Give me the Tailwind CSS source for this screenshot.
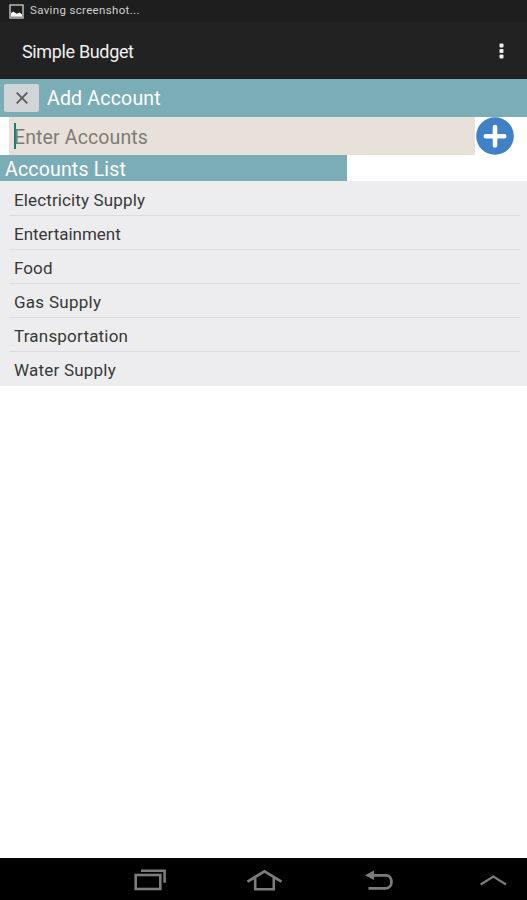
<!DOCTYPE html>
<html lang="en">
<head>
  <meta charset="UTF-8" />
  <meta name="viewport" content="width=device-width, initial-scale=1.0"/>
  <title>Simple Budget</title>
  <script src="https://cdn.jsdelivr.net/npm/@tailwindcss/browser@4"></script>
</head>
<body class="bg-white font-['Roboto',sans-serif]">
<div class="w-[527px] h-[900px] flex flex-col overflow-hidden">

  <!-- Status bar -->
  <div class="h-[22px] shrink-0 bg-[#1e1e1e] flex items-center pl-[9px] text-[#cfcfcf]">
    <svg class="w-[15px] h-[15px] shrink-0" viewBox="0 0 15 15">
      <rect x="1" y="1" width="13" height="13" fill="#1e1e1e" stroke="#c4c4c4" stroke-width="1.4"/>
      <path d="M2 12.700V9L4.500 7.500L7.500 9.800L10.500 8.500L13 10.500V12.700Z" fill="#fff"/>
    </svg>
    <span class="ml-[6px] -mt-px text-[11.5px] leading-none tracking-[0.34px] whitespace-nowrap">Saving screenshot...</span>
  </div>

  <!-- Action bar -->
  <header class="h-[57px] shrink-0 bg-[#222222] border-b border-[#1a2424] flex items-center justify-between pl-[22px] pr-[23px]">
    <h1 class="mt-[3px] text-[18px] leading-none text-[#f0f0f0] tracking-[-0.35px]">Simple Budget</h1>
    <svg class="mt-[2px] w-[5px] h-[16px]" viewBox="0 0 5 16" fill="#f0f0f0">
      <rect x="0.5" y="0.5" width="4" height="4" rx="1"/>
      <rect x="0.5" y="6" width="4" height="4" rx="1"/>
      <rect x="0.5" y="11.5" width="4" height="4" rx="1"/>
    </svg>
  </header>

  <div class="h-[38px] shrink-0 bg-[#7badb7] flex items-center pl-1">
    <button class="w-[35px] h-[28px] rounded-[2px] bg-[#d2d5d6] flex items-center justify-center">
      <svg class="w-[12px] h-[12px]" viewBox="0 0 12 12" stroke="#5c5c5c" stroke-width="1.9">
        <path d="M0.7 0.7L11.3 11.3M11.3 0.7L0.7 11.3"/>
      </svg>
    </button>
    <h2 class="ml-2 mt-px text-[19.5px] leading-none text-white tracking-[0.2px]">Add Account</h2>
  </div>

  <!-- New account -->
  <div class="h-[38px] shrink-0 flex pl-[9px]">
    <div class="w-[466px] bg-[#e7e1da] flex items-center pl-[5px]">
      <span class="w-[2px] h-[26px] bg-[#16846f]"></span>
      <span class="-ml-[2px] mt-[3px] text-[19.5px] leading-none text-[#7f7b76] tracking-[0.13px]">Enter Accounts</span>
    </div>
    <svg class="ml-px w-[38px] h-[38px]" viewBox="0 0 38 38">
      <circle cx="19" cy="19" r="18.8" fill="#3f80c6"/>
      <path d="M19 10V28.4M9.8 19.2H28.2" stroke="#fff" stroke-width="4.6" stroke-linecap="round"/>
    </svg>
  </div>

  <h2 class="w-[347px] h-[26px] shrink-0 bg-[#7badb7] pl-[5px] pt-[4px] flex items-center text-[19.5px] leading-none text-white tracking-[0.18px]">Accounts List</h2>

  <ul class="h-[205px] shrink-0 bg-[#ededef] pl-[9px] pr-[7px] pt-px grid grid-rows-6 text-[17px] leading-none text-[#383838] [&>li]:flex [&>li]:items-center [&>li]:pl-[5px] [&>li]:pt-[3px] [&>li:not(:last-child)]:border-b [&>li]:border-[#dcdcde]">
    <li class="tracking-[0.13px]">Electricity Supply</li>
    <li class="tracking-[-0.02px]">Entertainment</li>
    <li class="tracking-[0.1px]">Food</li>
    <li class="tracking-[0.27px]">Gas Supply</li>
    <li class="tracking-[0.2px]">Transportation</li>
    <li class="tracking-[0.22px]">Water Supply</li>
  </ul>

  <main class="flex-1 bg-white"></main>

  <!-- System navigation -->
  <nav class="h-[42px] shrink-0 bg-black">
    <svg class="w-[527px] h-[42px]" viewBox="0 0 527 42" fill="none" stroke="#7c7c7c">
      <rect x="135.7" y="17" width="24.6" height="14" stroke-width="2.6"/>
      <path d="M141 12.8H164.6V24.8" stroke-width="2.6"/>
      <path d="M247.5 23.6L264.5 13.4L281.5 23.6" stroke-width="2.8"/>
      <path d="M255.2 19.9V31.3H273.8V19.9" stroke-width="2.6"/>
      <path d="M370 17.300H386C389.500 17.300 391.500 20.300 391.500 23.800S389.500 30.300 386 30.300H368.500" stroke-width="2.7"/>
      <path d="M365 17.300L374 12.500V22Z" fill="#7c7c7c" stroke="none"/>
      <path d="M480.700 26.500L493.400 18.500L506 26.500" stroke-width="2.1"/>
    </svg>
  </nav>

</div>
</body>
</html>
